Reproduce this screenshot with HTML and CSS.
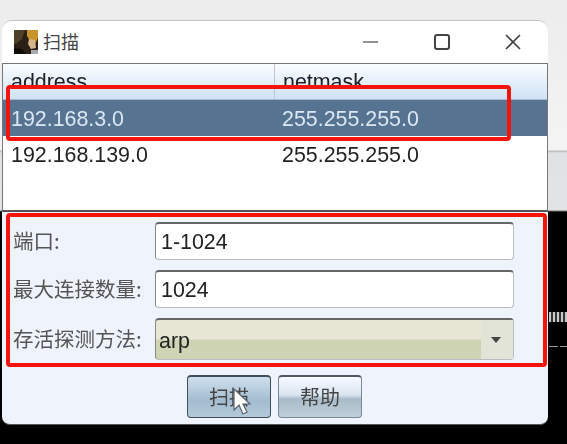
FILE: index.html
```html
<!DOCTYPE html>
<html lang="en">
<head>
  <meta charset="UTF-8">
  <meta name="viewport" content="width=device-width, initial-scale=1.0">
  <title>扫描</title>
  <link rel="stylesheet" href="styles.css">
</head>
<body>
  <!-- bits of the terminal behind the dialog -->
  <div class="behind-ticks"></div>
  <div class="behind-dash"></div>

  <div class="window">
    <div class="titlebar">
      <svg class="app-icon" width="24" height="24" viewBox="0 0 24 24">
        <rect width="24" height="24" fill="#2a2016"/>
        <path d="M0 0h11L8 9 3 13 0 14z" fill="#4f4128"/>
        <path d="M13 0h11v8l-3 6-5-3-3-5z" fill="#c8942c"/>
        <path d="M15 9l6 1 1 8-5 1-3-5z" fill="#d8b48c"/>
        <path d="M0 18l8 1 4 5H0z" fill="#100c08"/>
        <path d="M17 20h7v4h-7z" fill="#a8acb0"/>
      </svg>
      <span class="title">扫描</span>
      <div class="window-buttons">
        <svg width="18" height="18" viewBox="0 0 18 18"><path d="M1 9h15" stroke="#777" stroke-width="1.6" fill="none"/></svg>
        <svg width="18" height="18" viewBox="0 0 18 18"><rect x="2" y="2" width="14" height="14" rx="2" stroke="#444" stroke-width="2" fill="none"/></svg>
        <svg width="18" height="18" viewBox="0 0 18 18"><path d="M2 2l14 14M16 2L2 16" stroke="#444" stroke-width="1.7" fill="none"/></svg>
      </div>
    </div>

    <div class="table">
      <div class="row header"><div class="cell first">address</div><div class="cell">netmask</div></div>
      <div class="row selected"><div class="cell first">192.168.3.0</div><div class="cell">255.255.255.0</div></div>
      <div class="row"><div class="cell first">192.168.139.0</div><div class="cell">255.255.255.0</div></div>
    </div>

    <div class="form">
      <div class="form-row">
        <label>端口:</label>
        <div class="field">1-1024</div>
      </div>
      <div class="form-row">
        <label>最大连接数量:</label>
        <div class="field">1024</div>
      </div>
      <div class="form-row">
        <label>存活探测方法:</label>
        <div class="combo">
          <span class="combo-value">arp</span>
          <span class="combo-arrow"></span>
        </div>
      </div>
    </div>

    <div class="buttons">
      <div class="button active">扫描</div>
      <div class="button">帮助</div>
    </div>

    <!-- red marks drawn over the dialog -->
    <div class="mark mark-row"></div>
    <div class="mark mark-form"></div>
    <svg class="cursor" width="20" height="28" viewBox="0 0 20 28">
      <path d="M2 1v21l5-5 4 9 4-2-4-8h7z" fill="#fff" stroke="#5b6470" stroke-width="1.2"/>
    </svg>
  </div>
</body>
</html>
```

FILE: styles.css
```css
html, body {
  margin: 0;
  height: 100%;
}
body {
  position: relative;
  width: 567px;
  height: 444px;
  overflow: hidden;
  font-family: "Liberation Sans", "Noto Sans CJK SC", sans-serif;
  background: linear-gradient(#ececec 0, #f4f4f4 150px, #b8b8b8 151px, #dfe1e3 153px, #e2e4e6 210px, #000 212px);
}
.behind-ticks {
  position: absolute;
  left: 549px;
  top: 312px;
  width: 18px;
  height: 10px;
  background: repeating-linear-gradient(90deg, #c8c8c8 0, #c8c8c8 2px, #333 2px, #333 4px);
}
.behind-dash {
  position: absolute;
  left: 549px;
  top: 346px;
  width: 18px;
  height: 1px;
  background: repeating-linear-gradient(90deg, #999 0, #999 9px, #000 9px, #000 11px);
}
.window {
  position: relative;
  box-sizing: border-box;
  width: 546px;
  height: 405px;
  margin-left: 2px;
  top: 20px;
  background: #eff3fb;
  border-radius: 10px 10px 8px 8px;
  border-top: 1px solid #c4c4c4;
  border-bottom: 1px solid #555;
  color: #222;
  filter: blur(0.5px);
}
.titlebar {
  display: flex;
  align-items: center;
  height: 42px;
  padding-left: 12px;
  background: #fff;
  border-radius: 10px 10px 0 0;
}
.app-icon {
  margin-right: 5px;
}
.title {
  margin-top: -2px;
  font-family: "Noto Sans CJK SC", sans-serif;
  font-size: 18px;
  color: #444;
}
.window-buttons {
  display: flex;
  gap: 53px;
  margin-left: auto;
  margin-right: 26px;
}
.table {
  box-sizing: border-box;
  height: 149px;
  background: #fff;
  border: 1px solid #777;
  border-bottom: 2px solid #555;
}
.row {
  display: flex;
  height: 36px;
  line-height: 39px;
  font-size: 21.4px;
}
.header {
  height: 35px;
  line-height: 37px;
  background: linear-gradient(#fbfdff, #cfe2f6);
  border-bottom: 1px solid #a8bdd2;
}
.header .first {
  border-right: 1px solid #b8c8d8;
}
.selected {
  background: #567392;
  color: #dbe8f2;
}
.cell {
  padding-left: 8px;
  width: 262px;
}
.first {
  width: 263px;
}
.form {
  display: flex;
  flex-direction: column;
  gap: 10px;
  padding: 10px 34px 0 11px;
}
.form-row {
  display: flex;
  align-items: center;
}
label {
  width: 142px;
  margin-top: -2px;
  font-family: "Noto Sans CJK SC", sans-serif;
  font-size: 20.5px;
  line-height: 28px;
  white-space: nowrap;
  color: #555;
}
.field, .combo {
  box-sizing: border-box;
  width: 359px;
  height: 38px;
  line-height: 37px;
  padding-left: 5px;
  font-size: 21.4px;
  background: #fff;
  border: 1px solid #b8bcc4;
  border-top: 2px solid #666;
  border-left-color: #888;
  border-radius: 4px;
}
.combo {
  display: flex;
  height: 42px;
  padding-left: 3px;
  line-height: 42px;
  background: linear-gradient(#e8e7d6 0, #e8e7d6 48%, #cfd5b4 52%, #cfd5b4 100%);
}
.combo-value {
  flex: 1;
}
.combo-arrow {
  position: relative;
  width: 32px;
  background: #e3e4d8;
}
.combo-arrow::after {
  content: "";
  position: absolute;
  left: 10px;
  top: 17px;
  border-left: 5px solid transparent;
  border-right: 5px solid transparent;
  border-top: 6px solid #444;
}
.buttons {
  display: flex;
  gap: 7px;
  padding: 15px 0 0 185px;
}
.button {
  box-sizing: border-box;
  width: 84px;
  height: 43px;
  line-height: 39px;
  text-align: center;
  font-family: "Noto Sans CJK SC", sans-serif;
  font-size: 20px;
  color: #444;
  background: linear-gradient(#f8fbff 0, #d8e4ef 45%, #a9bbc9 55%, #c0cfdb 100%);
  border: 1px solid #7b8894;
  border-top: 2px solid #4e5a66;
  border-radius: 4px;
}
.active {
  background: linear-gradient(#cfe0ee, #a3bccf 60%, #b4cadb);
  border-color: #3f4d5c;
}
.mark {
  position: absolute;
  box-sizing: border-box;
  border: 4px solid #f5140c;
  border-radius: 4px;
}
.mark-row {
  left: 4px;
  top: 64px;
  width: 505px;
  height: 56px;
}
.mark-form {
  left: 4px;
  top: 192px;
  width: 541px;
  height: 154px;
}
.cursor {
  position: absolute;
  left: 230px;
  top: 367px;
}
```
